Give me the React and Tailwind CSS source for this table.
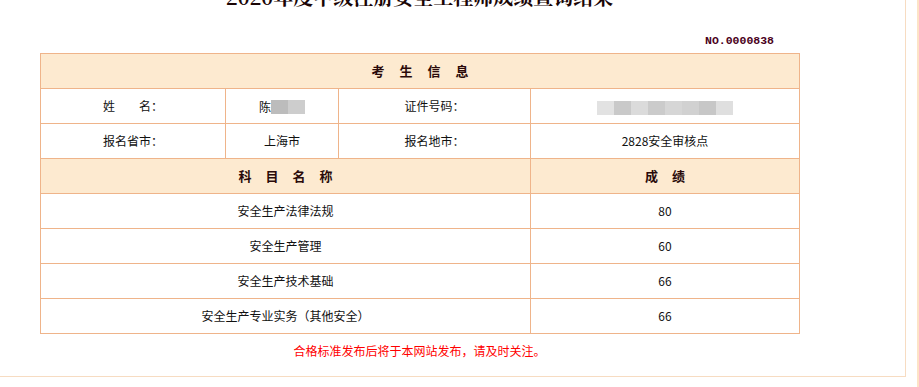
import React from 'react';

const cell = "border border-[#efb48a] text-center align-middle";
const head = "border border-[#efb48a] bg-[#fdead0] text-center align-middle font-bold text-[13px] text-[#2a0a0a]";

const subjects = [
  { name: '安全生产法律法规', score: '80' },
  { name: '安全生产管理', score: '60' },
  { name: '安全生产技术基础', score: '66' },
  { name: '安全生产专业实务（其他安全）', score: '66' },
];

const Blur = ({ shades }) => (
  <span className="inline-flex align-middle">
    {shades.map((c, i) => (
      <span key={i} className="inline-block w-[17px] h-[14px]" style={{ background: c }} />
    ))}
  </span>
);

const App = () => {
  return (
    <div className="flex w-[919px] h-[387px] overflow-hidden bg-white text-[12px] text-[#111]" style={{ fontFamily: '"Noto Sans CJK SC", "Noto Sans", sans-serif' }}>
      <div className="w-[906px] h-[377px] shrink-0 border-r border-b border-[#f7dcc2] overflow-hidden">
        <div className="ml-[40px] w-[759px]">
          <h1 className="mt-[-13px] h-[20px] leading-[20px] text-center text-[20px] font-bold text-[#1a0505]" style={{ fontFamily: '"Noto Serif CJK SC", "Noto Sans CJK SC", serif' }}>
            2020年度中级注册安全工程师成绩查询结果
          </h1>
          <div className="mt-[27px] pr-[25px] text-right text-[11.5px] leading-[14px] font-bold text-[#4a0020]" style={{ fontFamily: '"Liberation Mono", monospace' }}>
            NO.0000838
          </div>
          <table className="mt-[5px] w-[759px] table-fixed border-collapse">
            <colgroup>
              <col className="w-[185px]" />
              <col className="w-[113px]" />
              <col className="w-[192px]" />
              <col className="w-[269px]" />
            </colgroup>
            <tbody>
              <tr className="h-[35px]">
                <td colSpan={4} className={head}>
                  <span className="tracking-[15px] pl-[15px]">考生信息</span>
                </td>
              </tr>
              <tr className="h-[35px]">
                <td className={cell}>姓　　名：</td>
                <td className={cell}>
                  <span className="align-middle">陈</span>
                  <Blur shades={['#bcbcbc', '#cdcdcd']} />
                </td>
                <td className={cell}>证件号码：</td>
                <td className={cell}>
                  <Blur shades={['#e2e2e2', '#c9c9c9', '#dbdbdb', '#cbcbcb', '#d6d6d6', '#d1d1d1', '#c7c7c7', '#dfdfdf']} />
                </td>
              </tr>
              <tr className="h-[35px]">
                <td className={cell}>报名省市：</td>
                <td className={cell}>上海市</td>
                <td className={cell}>报名地市：</td>
                <td className={cell}>2828安全审核点</td>
              </tr>
              <tr className="h-[35px]">
                <td colSpan={3} className={head}>
                  <span className="tracking-[14px] pl-[14px]">科目名称</span>
                </td>
                <td className={head}>
                  <span className="tracking-[14px] pl-[14px]">成绩</span>
                </td>
              </tr>
              {subjects.map((s) => (
                <tr key={s.name} className="h-[35px]">
                  <td colSpan={3} className={cell}>{s.name}</td>
                  <td className={cell}>{s.score}</td>
                </tr>
              ))}
            </tbody>
          </table>
          <p className="mt-[8px] text-center text-[12px] text-[#ff0000]">
            合格标准发布后将于本网站发布，请及时关注。
          </p>
        </div>
      </div>
      <div className="ml-[11px] w-[2px] h-[387px] shrink-0 bg-[#fde3c6]" />
    </div>
  );
};

export default App;
